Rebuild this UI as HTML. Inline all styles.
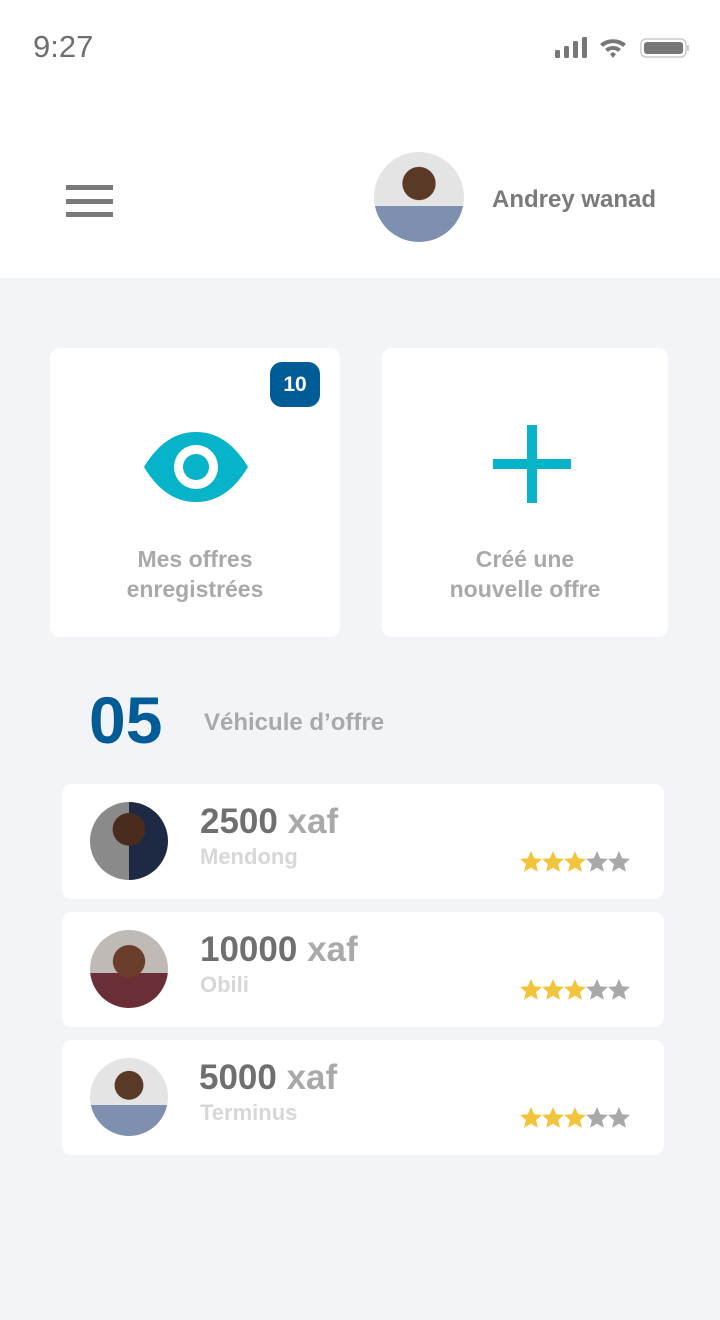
<!DOCTYPE html>
<html><head><meta charset="utf-8"><style>
*{margin:0;padding:0;box-sizing:border-box}
body{width:720px;height:1320px;background:#f3f4f8;font-family:"Liberation Sans",Roboto,sans-serif;position:relative;overflow:hidden}
.abs{position:absolute}
.head{left:0;top:0;width:720px;height:278px;background:#fff}
.card{background:#fff;border-radius:10px}
.lbl{color:#a9a9a9;font-size:23px;font-weight:bold;text-align:center;line-height:30px;width:100%}
.row{left:62px;width:602px;height:115px;background:#fff;border-radius:10px}
.av{left:28px;top:18px;width:78px;height:78px;border-radius:50%;overflow:hidden}
.price{left:138px;top:18px;font-size:35px;font-weight:bold;color:#6f6f6f}
.price span{color:#a9a9a9}
.place{left:138px;top:60px;font-size:22px;font-weight:bold;color:#d7d7d7}
.stars{left:458px;top:67px}
</style></head><body>
<svg width="0" height="0" style="position:absolute"><defs><path id="st" d="M11 0l3.2 7.2 7.8.7-5.9 5.2 1.8 7.7L11 16.8 4.1 20.8l1.8-7.7L0 7.9l7.8-.7z"/></defs></svg>
<div class="abs head"></div>
<div class="abs" style="left:33px;top:29px;font-size:31px;color:#6f6f6f">9:27</div>
<svg class="abs" style="left:554px;top:36px" width="136" height="24" viewBox="0 0 136 24">
<rect x="1" y="14" width="5" height="8" rx="1.5" fill="#777"/><rect x="10" y="10" width="5" height="12" rx="1.5" fill="#777"/><rect x="19" y="5" width="5" height="17" rx="1.5" fill="#777"/><rect x="28" y="1" width="5" height="21" rx="1.5" fill="#777"/>
<path d="M46 8a20 20 0 0 1 26 0l-3 3a15 15 0 0 0-20 0z M51 13a12 12 0 0 1 16 0l-3 3a7 7 0 0 0-10 0z M56 18l3-2 3 2-3 4z" fill="#777"/>
<rect x="87" y="3" width="45" height="18" rx="5" fill="none" stroke="#ccc" stroke-width="1.5"/><rect x="90" y="6" width="39" height="12" rx="3" fill="#777"/><rect x="133" y="9" width="2" height="6" fill="#ccc"/>
</svg>
<div class="abs" style="left:66px;top:185px;width:47px;height:5px;background:#7a7a7a"></div>
<div class="abs" style="left:66px;top:199px;width:47px;height:5px;background:#7a7a7a"></div>
<div class="abs" style="left:66px;top:212px;width:47px;height:5px;background:#7a7a7a"></div>
<div class="abs" style="left:374px;top:152px;width:90px;height:90px;border-radius:50%;background:radial-gradient(circle at 50% 35%,#5a3a26 0 22%,transparent 23%),linear-gradient(#e4e4e4 0 60%,#7f8fb0 60%)"></div>
<div class="abs" style="left:492px;top:186px;font-size:24px;font-weight:bold;color:#7a7a7a">Andrey wanad</div>

<div class="abs card" style="left:50px;top:348px;width:290px;height:289px">
<div class="abs" style="left:220px;top:14px;width:50px;height:45px;background:#005c97;border-radius:12px;color:#fff;font-size:21px;font-weight:bold;text-align:center;line-height:45px">10</div>
<svg class="abs" style="left:94px;top:83px" width="104" height="72" viewBox="0 0 104 72"><path d="M0 36C18 6 38 1 52 1s34 5 52 35C86 66 66 71 52 71S18 66 0 36z" fill="#06b3c8"/><circle cx="52" cy="36" r="22" fill="#fff"/><circle cx="52" cy="36" r="13" fill="#06b3c8"/></svg>
<div class="abs lbl" style="top:196px">Mes offres<br>enregistrées</div>
</div>
<div class="abs card" style="left:382px;top:348px;width:286px;height:289px">
<div class="abs" style="left:111px;top:111px;width:78px;height:10px;background:#06b3c8"></div>
<div class="abs" style="left:145px;top:77px;width:10px;height:78px;background:#06b3c8"></div>
<div class="abs lbl" style="top:196px">Créé une<br>nouvelle offre</div>
</div>

<div class="abs" style="left:89px;top:682px;font-size:66px;font-weight:bold;color:#005c97">05</div>
<div class="abs" style="left:204px;top:709px;font-size:24px;font-weight:bold;color:#a9a9a9">Véhicule d’offre</div>

<div class="abs row" style="top:784px"><div class="abs av" style="background:radial-gradient(circle at 50% 35%,#4a2c1e 0 25%,transparent 26%),linear-gradient(90deg,#8a8a8a 50%,#1e2a44 50%)"></div>
<div class="abs price">2500 <span>xaf</span></div><div class="abs place">Mendong</div>
<svg class="abs stars" width="112" height="22"><use href="#st" fill="#f2c43c"/><use href="#st" x="22" fill="#f2c43c"/><use href="#st" x="44" fill="#f2c43c"/><use href="#st" x="66" fill="#a9a9a9"/><use href="#st" x="88" fill="#a9a9a9"/></svg></div>
<div class="abs row" style="top:912px"><div class="abs av" style="background:radial-gradient(circle at 50% 40%,#6a3e2a 0 26%,transparent 27%),linear-gradient(#bfbab5 0 55%,#6a2e36 55%)"></div>
<div class="abs price">10000 <span>xaf</span></div><div class="abs place">Obili</div>
<svg class="abs stars" width="112" height="22"><use href="#st" fill="#f2c43c"/><use href="#st" x="22" fill="#f2c43c"/><use href="#st" x="44" fill="#f2c43c"/><use href="#st" x="66" fill="#a9a9a9"/><use href="#st" x="88" fill="#a9a9a9"/></svg></div>
<div class="abs row" style="top:1040px"><div class="abs av" style="background:radial-gradient(circle at 50% 35%,#5a3a26 0 22%,transparent 23%),linear-gradient(#e4e4e4 0 60%,#7f8fb0 60%)"></div>
<div class="abs price" style="left:137px">5000 <span>xaf</span></div><div class="abs place">Terminus</div>
<svg class="abs stars" width="112" height="22"><use href="#st" fill="#f2c43c"/><use href="#st" x="22" fill="#f2c43c"/><use href="#st" x="44" fill="#f2c43c"/><use href="#st" x="66" fill="#a9a9a9"/><use href="#st" x="88" fill="#a9a9a9"/></svg></div>
</body></html>
